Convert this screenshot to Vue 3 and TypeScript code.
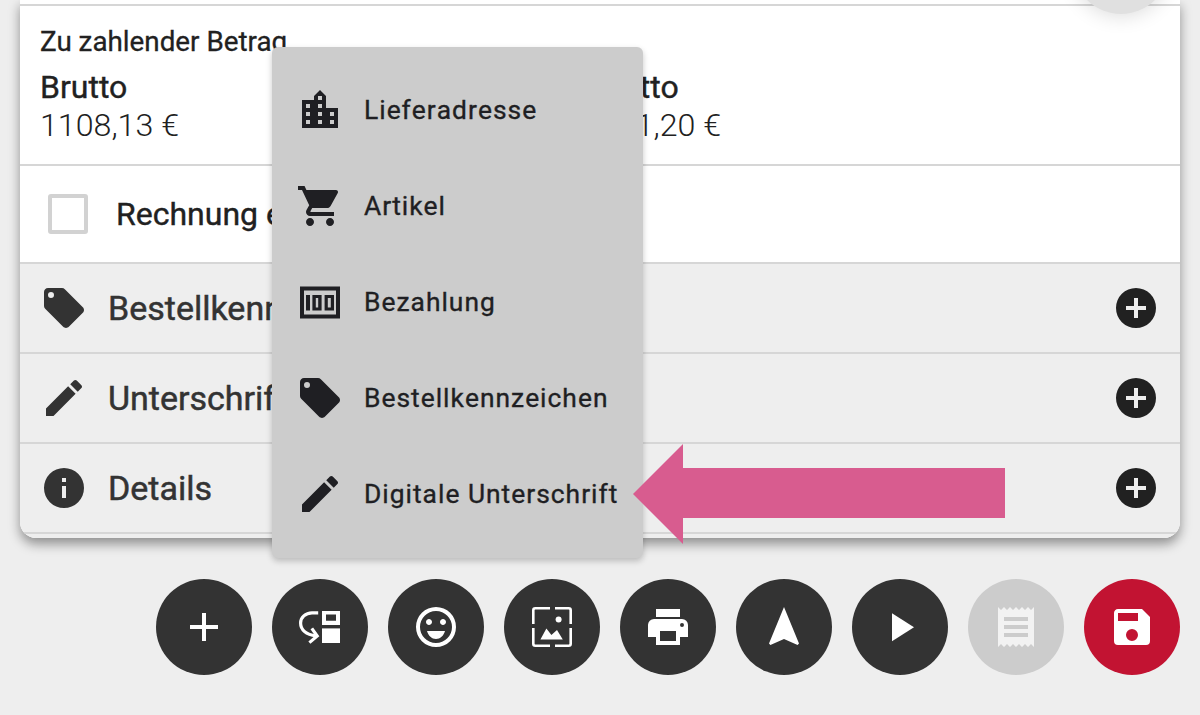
<script setup lang="ts">
const menu = [
  { label: 'Lieferadresse', d: 'M19,15H17V13H19M19,19H17V17H19M13,7H11V5H13M13,11H11V9H13M13,15H11V13H13M13,19H11V17H13M7,11H5V9H7M7,15H5V13H7M7,19H5V17H7M15,11V5L12,2L9,5V7H3V21H21V11H15Z' },
  { label: 'Artikel', d: 'M7 18c-1.1 0-1.99.9-1.99 2S5.9 22 7 22s2-.9 2-2-.9-2-2-2zM1 2v2h2l3.6 7.59-1.35 2.45c-.16.28-.25.61-.25.96 0 1.1.9 2 2 2h12v-2H7.42c-.14 0-.25-.11-.25-.25l.03-.12.9-1.63h7.45c.75 0 1.41-.41 1.75-1.03l3.58-6.49c.08-.14.12-.31.12-.48 0-.55-.45-1-1-1H5.21l-.94-2H1zm16 16c-1.1 0-1.99.9-1.99 2s.89 2 1.99 2 2-.9 2-2-.9-2-2-2z' },
  { label: 'Bezahlung', d: 'M2 4.3H22V20.3H2ZM4 6.3V18.3H20V6.3ZM5 8.5H7V16.3H5ZM8.2 8.5H12.8V16.3H8.2ZM9.9 10V14.8H11.1V10ZM14.3 8.5H19V16.3H14.3ZM15.9 10V14.8H17.4V10Z', evenodd: true },
  { label: 'Bestellkennzeichen', d: 'M5.5,7A1.5,1.5 0 0,1 4,5.5A1.5,1.5 0 0,1 5.5,4A1.5,1.5 0 0,1 7,5.5A1.5,1.5 0 0,1 5.5,7M21.41,11.58L12.41,2.58C12.05,2.22 11.55,2 11,2H4C2.89,2 2,2.89 2,4V11C2,11.55 2.22,12.05 2.59,12.41L11.58,21.41C11.95,21.77 12.45,22 13,22C13.55,22 14.05,21.77 14.41,21.41L21.41,14.41C21.78,14.05 22,13.55 22,13C22,12.44 21.77,11.94 21.41,11.58Z' },
  { label: 'Digitale Unterschrift', d: 'M20.71,7.04C21.1,6.65 21.1,6 20.71,5.63L18.37,3.29C18,2.9 17.35,2.9 16.96,3.29L15.12,5.12L18.87,8.87M3,17.25V21H6.75L17.81,9.93L14.06,6.18L3,17.25Z' },
]
const rows = [
  { label: 'Bestellkennzeichen', d: menu[3].d },
  { label: 'Unterschrift', d: menu[4].d },
  { label: 'Details', d: 'M13,9H11V7H13M13,17H11V11H13M12,2A10,10 0 0,0 2,12A10,10 0 0,0 12,22A10,10 0 0,0 22,12A10,10 0 0,0 12,2Z' },
]
const plusCircle = 'M17,13H13V17H11V13H7V11H11V7H13V11H17M12,2A10,10 0 0,0 2,12A10,10 0 0,0 12,22A10,10 0 0,0 22,12A10,10 0 0,0 12,2Z'
</script>

<template>
  <div class="page">
    <div class="fab-top"></div>
    <section class="card">
      <div class="strip"></div>
      <div class="amount">
        <div class="amount-title">Zu zahlender Betrag</div>
        <div class="amount-cols">
          <div class="col">
            <div class="col-label">Brutto</div>
            <div class="col-value">1108,13 €</div>
          </div>
          <div class="col">
            <div class="col-label">Netto</div>
            <div class="col-value">931,20 €</div>
          </div>
        </div>
      </div>
      <label class="check-row">
        <span class="checkbox"></span>
        <span class="check-label">Rechnung erstellen</span>
      </label>
      <div v-for="r in rows" :key="r.label" class="acc-row">
        <svg class="acc-icon" viewBox="0 0 24 24"><path :d="r.d" /></svg>
        <span class="acc-label">{{ r.label }}</span>
        <svg class="acc-plus" viewBox="0 0 24 24"><path :d="plusCircle" /></svg>
      </div>
      <div class="card-end"></div>
    </section>

    <nav class="fabs">
      <button class="fab"><svg viewBox="0 0 24 24"><path d="M19,13H13V19H11V13H5V11H11V5H13V11H19V13Z" /></svg></button>
      <button class="fab">
        <svg viewBox="0 0 24 24">
          <path fill-rule="evenodd" d="M13 4H22V11H13ZM15 5.7V8.9H20V5.7Z" />
          <path d="M13 12.7H22V20H13Z" />
          <path class="stroke" d="M11.1 4.9H8C4.7 4.9 2.3 7.3 2.3 10C2.3 13.4 5 15.8 10 16.4" />
          <path class="stroke" d="M7.9 12.7L10.6 16.5L6.7 19.8" />
        </svg>
      </button>
      <button class="fab">
        <svg viewBox="0 0 24 24">
          <path d="M20,12A8,8 0 0,0 12,4A8,8 0 0,0 4,12A8,8 0 0,0 12,20A8,8 0 0,0 20,12M22,12A10,10 0 0,1 12,22A10,10 0 0,1 2,12A10,10 0 0,1 12,2A10,10 0 0,1 22,12M10,9.5C10,10.3 9.3,11 8.5,11C7.7,11 7,10.3 7,9.5C7,8.7 7.7,8 8.5,8C9.3,8 10,8.7 10,9.5M17,9.5C17,10.3 16.3,11 15.5,11C14.7,11 14,10.3 14,9.5C14,8.7 14.7,8 15.5,8C16.3,8 17,8.7 17,9.5M7.5,14H16.5C15.8,16.4 14.1,18 12,18C9.9,18 8.2,16.4 7.5,14Z" />
        </svg>
      </button>
      <button class="fab">
        <svg viewBox="0 0 24 24">
          <path class="stroke frame" d="M2.65 10.5V3.65A1 1 0 0 1 3.65 2.65H11M13.5 2.65H20.35A1 1 0 0 1 21.35 3.65V10.5M21.35 12.5V20.35A1 1 0 0 1 20.35 21.35H13.5M11 21.35H3.65A1 1 0 0 1 2.65 20.35V12.5" />
          <circle cx="15.3" cy="8.2" r="1.5" />
          <path d="M6.2 18.2L9.2 12.7L11.7 16L14.5 13.5L17.4 18.2Z" />
        </svg>
      </button>
      <button class="fab"><svg viewBox="0 0 24 24"><path d="M18,3H6V7H18M19,12A1,1 0 0,1 18,11A1,1 0 0,1 19,10A1,1 0 0,1 20,11A1,1 0 0,1 19,12M16,19H8V14H16M19,8H5A3,3 0 0,0 2,11V17H6V21H18V17H22V11A3,3 0 0,0 19,8Z" /></svg></button>
      <button class="fab"><svg viewBox="0 0 24 24"><path d="M12,2L4.5,20.29L5.21,21L12,18L18.79,21L19.5,20.29L12,2Z" /></svg></button>
      <button class="fab"><svg viewBox="0 0 24 24"><path d="M8,5.14V19.14L19,12.14L8,5.14Z" /></svg></button>
      <button class="fab fab-off"><svg viewBox="0 0 24 24"><path d="M3,22L4.5,20.5L6,22L7.5,20.5L9,22L10.5,20.5L12,22L13.5,20.5L15,22L16.5,20.5L18,22L19.5,20.5L21,22V2L19.5,3.5L18,2L16.5,3.5L15,2L13.5,3.5L12,2L10.5,3.5L9,2L7.5,3.5L6,2L4.5,3.5L3,2M18,9H6V7H18M18,13H6V11H18M18,17H6V15H18V17Z" /></svg></button>
      <button class="fab fab-save"><svg viewBox="0 0 24 24"><path d="M15,9H5V5H15M12,19A3,3 0 0,1 9,16A3,3 0 0,1 12,13A3,3 0 0,1 15,16A3,3 0 0,1 12,19M17,3H5C3.89,3 3,3.9 3,5V19A2,2 0 0,0 5,21H19A2,2 0 0,0 21,19V7L17,3Z" /></svg></button>
    </nav>

    <div class="menu">
      <div v-for="m in menu" :key="m.label" class="menu-item">
        <svg class="menu-icon" viewBox="0 0 24 24"><path :d="m.d" :fill-rule="m.evenodd ? 'evenodd' : undefined" /></svg>
        <span class="menu-label">{{ m.label }}</span>
      </div>
    </div>

    <svg class="arrow" viewBox="0 0 372 100"><path d="M0 50L50 0V24H372V74H50V100Z" /></svg>
  </div>
</template>

<style>
html, body { margin: 0; padding: 0; background: #eeeeee; }
</style>

<style scoped>
.page {
  position: relative;
  width: 1200px;
  height: 715px;
  overflow: hidden;
  background: #eeeeee;
  font-family: Roboto, "Liberation Sans", sans-serif;
  color: #212121;
}
.fab-top {
  position: absolute;
  z-index: 2;
  left: 1073px;
  top: -82px;
  width: 96px;
  height: 96px;
  border-radius: 50%;
  background: #e0e0e0;
  box-shadow: 0 2px 20px rgba(0, 0, 0, 0.14);
}
.card {
  margin: 0 20px;
  background: #fff;
  border-radius: 0 0 16px 16px;
  box-shadow: 0 6px 12px rgba(0, 0, 0, 0.4);
  overflow: hidden;
}
.strip {
  height: 4px;
  border-bottom: 2px solid #d6d6d6;
}
.amount {
  height: 160px;
  box-sizing: border-box;
  padding: 19px 20px 0;
  border-bottom: 2px solid #d6d6d6;
}
.amount-title {
  font-size: 27.8px;
  -webkit-text-stroke: 0.3px #212121;
  line-height: 34px;
}
.amount-cols {
  display: grid;
  grid-template-columns: 560px 1fr;
  margin-top: 9px;
}
.col-label {
  font-size: 32px;
  -webkit-text-stroke: 0.4px #212121;
  line-height: 38px;
}
.col-value {
  font-size: 32.2px;
  line-height: 38px;
  font-weight: 300;
}
.check-row {
  display: flex;
  align-items: center;
  height: 98px;
  box-sizing: border-box;
  padding: 0 0 0 28px;
  border-bottom: 2px solid #d6d6d6;
}
.checkbox {
  width: 40px;
  height: 40px;
  box-sizing: border-box;
  border: 4px solid #d2d2d2;
  border-radius: 3px;
}
.check-label {
  margin-left: 28px;
  font-size: 32px;
  -webkit-text-stroke: 0.4px #212121;
}
.acc-row {
  display: flex;
  align-items: center;
  height: 90px;
  box-sizing: border-box;
  padding: 0 20px 0 20px;
  background: #eeeeee;
  border-bottom: 2px solid #d6d6d6;
  color: #333;
}
.acc-icon {
  width: 48px;
  height: 48px;
  fill: #333;
  flex: none;
}
.acc-label {
  margin-left: 20px;
  font-size: 34px;
  -webkit-text-stroke: 0.5px #333;
  flex: 1;
}
.acc-plus {
  width: 48px;
  height: 48px;
  fill: #212121;
  flex: none;
}
.card-end {
  height: 4px;
  background: #eeeeee;
}
.fabs {
  display: flex;
  justify-content: flex-end;
  gap: 20px;
  margin: 41px 20px 0;
}
.fab {
  width: 96px;
  height: 96px;
  padding: 0;
  border: 0;
  border-radius: 50%;
  background: #333;
  display: flex;
  align-items: center;
  justify-content: center;
}
.fab svg {
  width: 48px;
  height: 48px;
  fill: #fff;
}
.fab .stroke {
  fill: none;
  stroke: #fff;
  stroke-width: 1.6;
}
.fab .stroke.frame {
  stroke-width: 1.3;
}
.fab-off { background: #cccccc; }
.fab-off svg { fill: #f2f2f2; }
.fab-save { background: #c21332; }
.menu {
  position: absolute;
  z-index: 3;
  left: 272px;
  top: 47px;
  width: 371px;
  height: 511px;
  box-sizing: border-box;
  padding-top: 15px;
  background: #cccccc;
  border-radius: 6px;
  box-shadow: 0 3px 6px rgba(0, 0, 0, 0.22);
}
.menu-item {
  display: flex;
  align-items: center;
  height: 96px;
  padding-left: 24px;
}
.menu-icon {
  width: 48px;
  height: 48px;
  fill: #1f1f23;
  flex: none;
}
.menu-label {
  margin-left: 20px;
  line-height: 32px;
  font-size: 26.4px;
  -webkit-text-stroke: 0.35px #1f1f23;
  font-kerning: none;
  letter-spacing: 1px;
  color: #1f1f23;
}
.arrow {
  position: absolute;
  z-index: 4;
  left: 633px;
  top: 444px;
  width: 372px;
  height: 100px;
  fill: #d85c8f;
}
</style>
